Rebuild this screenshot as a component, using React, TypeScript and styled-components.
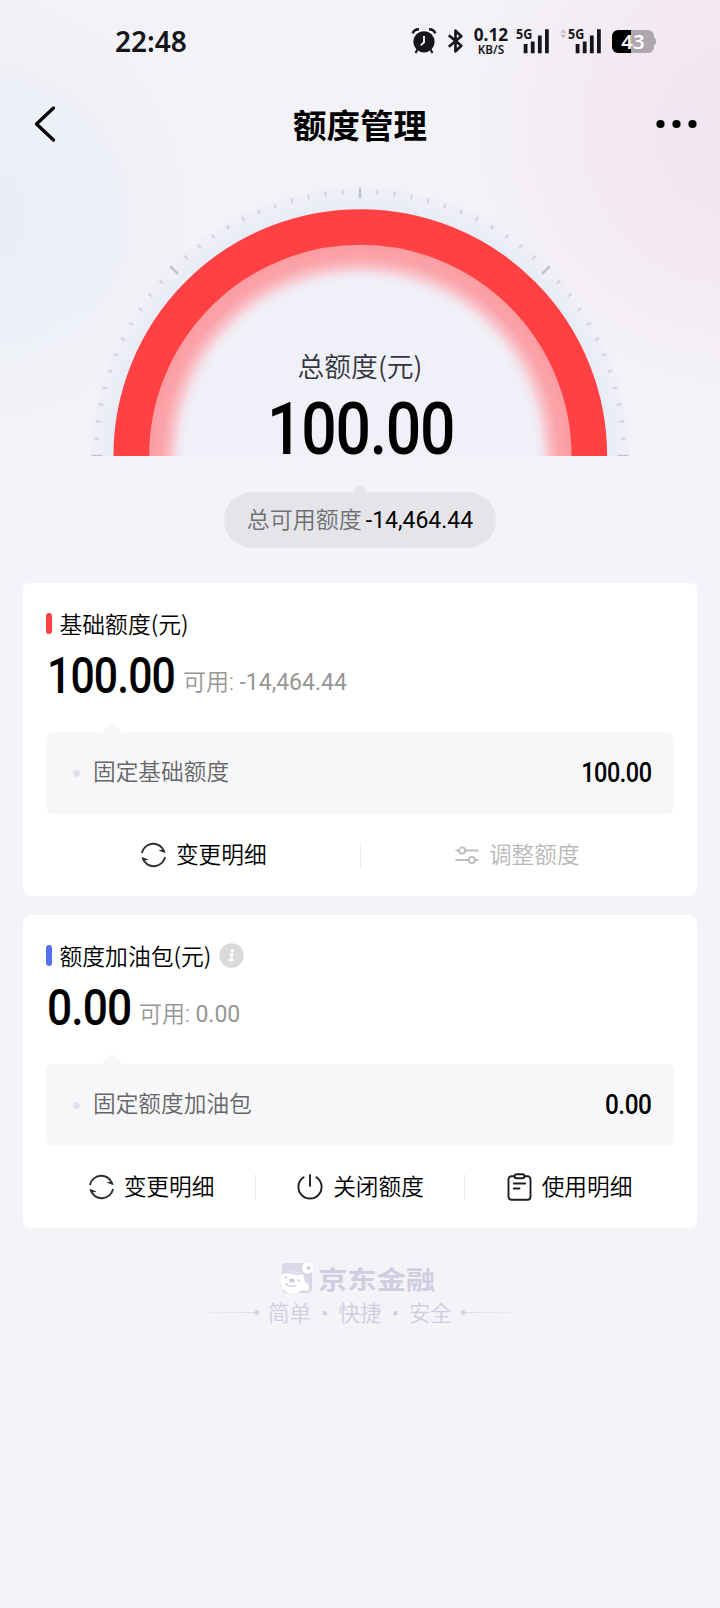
import React from "react";
import styled, { createGlobalStyle } from "styled-components";

const cjk = '"Noto Sans CJK SC", sans-serif';

const GlobalStyle = createGlobalStyle`
  *, *::before, *::after { box-sizing: border-box; }
  body { margin: 0; background: #f3f3f8; }
`;

const Page = styled.div`
  width: 720px;
  height: 1608px;
  overflow: hidden;
  display: flex;
  flex-direction: column;
  font-family: Roboto, ${cjk};
  color: #000;
  background:
    radial-gradient(circle at 740px 130px, #f4e5ed 0, rgba(244, 230, 238, 0.9) 100px, rgba(243, 238, 244, 0) 265px),
    radial-gradient(circle at -20px 215px, #e9edf6 0, rgba(234, 238, 247, 0.85) 70px, rgba(240, 240, 248, 0) 220px),
    linear-gradient(#f3f2f7, #f3f3f8 540px);
`;

const StatusBar = styled.header`
  height: 80px;
  display: flex;
  align-items: center;
  justify-content: space-between;
  padding: 2px 66px 0 115px;
`;

const Clock = styled.time`
  font: 600 28px/36px "Noto Sans", sans-serif;
  color: #15161a;
`;

const StatusIcons = styled.div`
  display: flex;
  align-items: center;
  color: #15161a;
`;

const Speed = styled.div`
  width: 36px;
  height: 30px;
  margin: 0 8px 0 9px;
  font-family: "Noto Sans", sans-serif;
  text-align: center;
`;

const SpeedValue = styled.div`
  font-size: 17.3px;
  font-weight: 700;
  line-height: 17px;
`;

const SpeedUnit = styled.div`
  font-size: 11.7px;
  font-weight: 600;
  line-height: 12px;
`;

const Battery = styled.div`
  width: 42px;
  height: 23px;
  margin-left: 11px;
  border-radius: 6px;
  display: flex;
  justify-content: center;
  position: relative;
  background: linear-gradient(90deg, #000 19px, #aea7ae 19px);
  color: #fff;
  font: 600 20.5px/22px "Noto Sans", sans-serif;
  &::after {
    content: "";
    position: absolute;
    right: -2px;
    top: 8px;
    width: 3px;
    height: 7px;
    border-radius: 0 2px 2px 0;
    background: #aea7ae;
  }
`;

const NavBar = styled.nav`
  height: 90px;
  display: flex;
  align-items: center;
  justify-content: space-between;
  padding: 0 23px 2px 34px;
`;

const NavButton = styled.button`
  width: 41px;
  height: 40px;
  padding: 0;
  border: 0;
  background: none;
  display: flex;
  align-items: center;
`;

const PageTitle = styled.h1`
  margin: 0 0 0 -11px;
  font: 700 33.5px/48px ${cjk};
`;

const Gauge = styled.section`
  height: 286px;
  position: relative;
  display: flex;
  flex-direction: column;
  align-items: center;
  padding-top: 178px;
`;

const Dial = styled.svg`
  position: absolute;
  left: 0;
  top: 0;
`;

const GaugeLabel = styled.div`
  position: relative;
  font-size: 26.8px;
  line-height: 36px;
  margin-bottom: 9px;
  color: #34353c;
  font-family: ${cjk};
  font-weight: 350;
`;

const Figure = styled.div<{ $size: number; $w: number; $right?: boolean; $scale?: number }>`
  position: relative;
  flex: none;
  width: ${(p) => p.$w}px;
  height: ${(p) => p.$size}px;
  display: flex;
  justify-content: ${(p) => (p.$right ? "flex-end" : "flex-start")};
  > span {
    font: 500 ${(p) => p.$size}px/${(p) => p.$size}px Roboto, sans-serif;
    letter-spacing: -0.02em;
    transform: scaleX(${(p) => p.$scale ?? 0.855});
    transform-origin: ${(p) => (p.$right ? "right" : "left")};
    white-space: nowrap;
  }
`;

const Available = styled.div`
  position: relative;
  align-self: center;
  width: 272px;
  height: 56px;
  margin-top: 36px;
  padding-top: 1px;
  border-radius: 28px;
  background: #e4e4e9;
  display: flex;
  align-items: center;
  justify-content: center;
  gap: 4px;
  font-size: 23px;
  line-height: 30px;
`;

const AvailableLabel = styled.span`
  color: #6f6f73;
  font-weight: 350;
`;

const Caret = styled.svg<{ $x: number; $y: number }>`
  position: absolute;
  left: ${(p) => p.$x}px;
  top: ${(p) => p.$y}px;
`;

const Cards = styled.main`
  margin-top: 35px;
  padding: 0 23px;
  display: flex;
  flex-direction: column;
  gap: 19px;
`;

const Card = styled.section`
  height: 313px;
  padding: 24px 23px 0;
  border-radius: 7px;
  background: #fff;
`;

const CardTitle = styled.h2`
  margin: 0;
  height: 32px;
  display: flex;
  align-items: center;
  font: 350 22.8px/32px ${cjk};
`;

const TitleText = styled.span`
  padding-top: 1px;
`;

const Marker = styled.i<{ $color: string }>`
  width: 6px;
  height: 21px;
  margin-right: 7.5px;
  border-radius: 3px;
  background: ${(p) => p.$color};
`;

const AmountRow = styled.div`
  height: 93px;
  display: flex;
  align-items: flex-start;
  padding: 13px 0 0 1px;
`;

const Usable = styled.span`
  padding-top: 15px;
  font-size: 23px;
  line-height: 32px;
  font-weight: 350;
  color: #969696;
  > span { font-weight: 400; }
`;

const Detail = styled.div`
  position: relative;
  height: 82px;
  padding: 0 23px 0 27px;
  display: flex;
  align-items: center;
  border-radius: 7px;
  background: #f7f7fa;
`;

const Dot = styled.i`
  width: 7px;
  height: 7px;
  margin-right: 13px;
  border-radius: 50%;
  background: #e1e0ee;
`;

const DetailLabel = styled.span`
  flex: 1;
  font-size: 22.7px;
  line-height: 32px;
  font-weight: 350;
  color: #666668;
`;

const Actions = styled.div`
  height: 82px;
  display: flex;
  align-items: center;
`;

const Action = styled.button<{ $muted?: boolean }>`
  flex: 1 1 0;
  height: 26px;
  padding: 0;
  border: 0;
  background: none;
  display: flex;
  align-items: center;
  justify-content: center;
  gap: 10px;
  font: 350 22.7px/24px ${cjk};
  color: ${(p) => (p.$muted ? "#b8b8b8" : "#000")};
  > span { padding-bottom: 2px; }
  &:first-child { padding-left: 1px; }
  & + & { box-shadow: -1px 0 #eeeef1; }
`;

const Footer = styled.footer`
  margin-top: 29px;
  display: flex;
  flex-direction: column;
  align-items: center;
  color: #cfcde0;
`;

const Brand = styled.div`
  height: 40px;
  display: flex;
  align-items: center;
  gap: 5px;
  margin-right: 4px;
  padding-top: 1px;
`;

const BrandName = styled.span`
  width: 117px;
  font: 700 25.5px/40px ${cjk};
  > span {
    display: inline-block;
    transform: scaleX(1.15);
    transform-origin: left;
  }
`;

const Tagline = styled.div`
  height: 32px;
  display: flex;
  align-items: center;
  gap: 8px;
  margin-top: -1px;
  font: 350 21.5px/32px ${cjk};
`;

const Words = styled.span`
  display: flex;
  width: 184px;
  justify-content: space-between;
`;

const Rule = styled.i<{ $flip?: boolean }>`
  width: 52px;
  height: 5px;
  transform: ${(p) => (p.$flip ? "scaleX(-1)" : "none")};
  background:
    radial-gradient(circle at 49px 2.5px, #d8d6e5 2px, transparent 3px),
    linear-gradient(90deg, rgba(224, 223, 235, 0.3), #dcdae8) 0 2px / 48px 1px no-repeat;
`;

const AlarmIcon = () => (
  <svg width="26" height="26" viewBox="0 0 26 26">
    <circle cx="13" cy="13.8" r="10.6" fill="currentColor" />
    <path d="M1.6 5.4Q3.5 1.2 8 1.3M24.4 5.4Q22.5 1.2 18 1.3" stroke="currentColor" strokeWidth="2.6" fill="none" />
    <path d="M6.5 21.5L4.5 25M19.5 21.5L21.5 25" stroke="currentColor" strokeWidth="2.2" />
    <path d="M13 8V14.3L9.8 17.4" stroke="#f3f2f7" strokeWidth="1.9" fill="none" />
  </svg>
);

const Bluetooth = styled.svg`
  margin-left: 10px;
`;

const BluetoothIcon = () => (
  <Bluetooth width="17" height="26" viewBox="0 0 17 26">
    <path d="M1.8 7.3L14.3 17.8L8.5 23.3V2.7L14.3 8.2L1.8 18.7" fill="none" stroke="currentColor" strokeWidth="2.7" strokeLinejoin="round" />
  </Bluetooth>
);

const Signal = styled.div<{ $roaming?: boolean }>`
  position: relative;
  width: ${(p) => (p.$roaming ? 41 : 32)}px;
  height: 26px;
  margin-left: ${(p) => (p.$roaming ? 11 : 0)}px;
  display: flex;
  justify-content: flex-end;
`;

const Generation = styled.span<{ $roaming?: boolean }>`
  position: absolute;
  left: ${(p) => (p.$roaming ? 8 : -1)}px;
  top: -3px;
  font: 700 13.5px/18px "Noto Sans", sans-serif;
  transform: scaleX(0.93);
  transform-origin: left;
`;

const SignalIcon = ({ roaming }: { roaming?: boolean }) => (
  <Signal $roaming={roaming}>
    <svg width={roaming ? 41 : 32} height="26" viewBox={roaming ? "-9 0 41 26" : "0 0 32 26"}>
      {roaming && <path d="M-9 5L-5.7 1L-2.4 5ZM-9 6.6L-5.7 10.6L-2.4 6.6Z" fill="#c9c6cc" />}
      <path d="M6.7 16h3.8v9.2h-3.8zM13.8 13.5h3.8v11.7h-3.8zM20.9 7.5h3.8v17.7h-3.8zM28 1.3h3.8v23.9h-3.8z" fill="currentColor" />
    </svg>
    <Generation $roaming={roaming}>5G</Generation>
  </Signal>
);

const RefreshIcon = () => (
  <svg width="25" height="26" viewBox="0 0 25 26">
    <g fill="none" stroke="#2d2d30" strokeWidth="1.9">
      <path d="M0.9 11A11.6 11.6 0 0 1 23.2 9.5" />
      <path d="M24.1 15A11.6 11.6 0 0 1 1.8 16.5" />
    </g>
    <path d="M17.5 8.6L24.6 11.3L22.9 7ZM7.5 17.4L0.4 14.7L2.1 19Z" fill="#2d2d30" />
  </svg>
);

const SlidersIcon = () => (
  <svg width="24" height="24" viewBox="0 0 24 24" fill="none" stroke="#bfbfbf" strokeWidth="1.9">
    <path d="M0.5 7.5H3.7M10.3 7.5H23.5M0.5 17H13.5M20.2 17H23.5" />
    <circle cx="7" cy="7.5" r="3.1" />
    <circle cx="16.8" cy="17" r="3.1" />
  </svg>
);

const PowerIcon = () => (
  <svg width="26" height="26" viewBox="0 0 26 26" fill="none" stroke="#1f1f22" strokeWidth="1.9" strokeLinecap="round">
    <path d="M6.6 3.3A11.6 11.6 0 1 0 19.4 3.3M13 1V12" />
  </svg>
);

const ClipboardIcon = () => (
  <svg width="25" height="28" viewBox="0 0 25 28" fill="none" stroke="#1f1f22" strokeWidth="1.9" strokeLinecap="round">
    <path d="M7.5 3.2H4.5A3 3 0 0 0 1.5 6.2V23.8A3 3 0 0 0 4.5 26.8H20.5A3 3 0 0 0 23.5 23.8V6.2A3 3 0 0 0 20.5 3.2H17.5" />
    <rect x="7.5" y="1.2" width="10" height="4" rx="2" />
    <path d="M6.8 10.5H18.2M6.8 15.5H12.5" />
  </svg>
);

const Info = styled.svg`
  margin-left: 8px;
`;

const InfoIcon = () => (
  <Info width="25" height="25" viewBox="0 0 25 25">
    <circle cx="12.5" cy="12.5" r="12.3" fill="#dadada" />
    <circle cx="13.4" cy="7.7" r="1.8" fill="#fff" />
    <path d="M10.3 11.2H13.2L12 17.2H14.6M9.4 17.2H12" fill="none" stroke="#fff" strokeWidth="2" />
  </Info>
);

const MascotIcon = () => (
  <svg width="32" height="32" viewBox="0 0 32 32">
    <path d="M5 1H22L31 9V26Q31 31 26 31H6Q1 31 1 26V5Q1 1 5 1Z" fill="#dad8e7" />
    <path d="M0 13Q5 9.5 11 12Q16 14 22 12L24 20Q30 23 27.5 28L25 29Q20 27 17 31H7Q0 28 0 22Z" fill="#fff" />
    <path d="M8 8.5Q13 11.5 20 11" stroke="#e8e6f0" strokeWidth="1.5" fill="none" />
    <circle cx="26.5" cy="6" r="5.5" fill="#fff" />
    <circle cx="27.5" cy="6" r="2.1" fill="#cfcde0" />
    <ellipse cx="11" cy="18.5" rx="3" ry="2" fill="#cbc9dc" transform="rotate(10 11 18.5)" />
    <circle cx="5" cy="15.5" r="1.1" fill="#c5c3d8" />
    <circle cx="17.5" cy="18.5" r="1.1" fill="#c5c3d8" />
    <path d="M4.5 21.5Q9 26 15 23.5" stroke="#cbc9dc" strokeWidth="1.3" fill="none" />
  </svg>
);

const ticks = Array.from({ length: 49 }, (_, i) => ({ angle: -90 + i * 3.75, major: i % 12 === 0 }));

const DialDrawing = () => (
  <Dial width="720" height="286" viewBox="0 170 720 286">
    <defs>
      <radialGradient id="glow" gradientUnits="userSpaceOnUse" cx="360" cy="456" r="211">
        <stop offset="0.83" stopColor="#eff0f8" />
        <stop offset="0.86" stopColor="#f4e4ec" />
        <stop offset="0.9" stopColor="#f9bfc7" />
        <stop offset="0.94" stopColor="#fba4aa" />
        <stop offset="1" stopColor="#fb9da3" />
      </radialGradient>
      <radialGradient id="halo" gradientUnits="userSpaceOnUse" cx="360" cy="456" r="269">
        <stop offset="0.92" stopColor="#e8ecf6" />
        <stop offset="0.96" stopColor="#edeef7" />
        <stop offset="1" stopColor="#f0f0f7" />
      </radialGradient>
    </defs>
    <circle cx="360" cy="456" r="269" fill="url(#halo)" />
    {ticks.map(({ angle, major }) => (
      <path
        key={angle}
        d={major ? "M360 187.5V198.5" : "M360 189.7V194.3"}
        stroke={major ? "#bfc1cc" : "#d3d4de"}
        strokeWidth={major ? 2.4 : 2.2}
        transform={`rotate(${angle} 360 456)`}
      />
    ))}
    <circle cx="360" cy="456" r="212" fill="url(#glow)" />
    <circle cx="360.3" cy="456" r="229" fill="none" stroke="#ff4144" strokeWidth="35.7" />
  </Dial>
);

const Notch = ({ x, y, color }: { x: number; y: number; color: string }) => (
  <Caret $x={x} $y={y} width="28" height="13" viewBox="0 0 28 13">
    <path d="M0 13Q3 12.5 5 10L11.5 3Q14 0.5 16.5 3L23 10Q25 12.5 28 13Z" fill={color} />
  </Caret>
);

type Item = { icon: React.ReactNode; label: string; muted?: boolean };

type QuotaProps = {
  title: string;
  color: string;
  info?: boolean;
  amount: string;
  amountWidth: number;
  amountScale: number;
  usable: string;
  detail: string;
  actions: Item[];
};

const QuotaCard = ({ title, color, info, amount, amountWidth, amountScale, usable, detail, actions }: QuotaProps) => (
  <Card>
    <CardTitle>
      <Marker $color={color} />
      <TitleText>{title}</TitleText>
      {info && <InfoIcon />}
    </CardTitle>
    <AmountRow>
      <Figure $size={49.5} $w={amountWidth} $scale={amountScale}><span>{amount}</span></Figure>
      <Usable>可用: <span>{usable}</span></Usable>
    </AmountRow>
    <Detail>
      <Notch x={52} y={-11} color="#f7f7fa" />
      <Dot />
      <DetailLabel>{detail}</DetailLabel>
      <Figure $size={27.5} $w={80} $scale={amountScale - 0.01} $right><span>{amount}</span></Figure>
    </Detail>
    <Actions>
      {actions.map((a) => (
        <Action key={a.label} $muted={a.muted}>
          {a.icon}
          <span>{a.label}</span>
        </Action>
      ))}
    </Actions>
  </Card>
);

export default function App() {
  return (
    <Page>
      <GlobalStyle />
      <StatusBar>
        <Clock>22:48</Clock>
        <StatusIcons>
          <AlarmIcon />
          <BluetoothIcon />
          <Speed>
            <SpeedValue>0.12</SpeedValue>
            <SpeedUnit>KB/S</SpeedUnit>
          </Speed>
          <SignalIcon />
          <SignalIcon roaming />
          <Battery>43</Battery>
        </StatusIcons>
      </StatusBar>
      <NavBar>
        <NavButton aria-label="返回">
          <svg width="22" height="38" viewBox="0 0 22 38">
            <path d="M19.5 3L2.5 19L19.5 35" fill="none" stroke="#000" strokeWidth="3.3" strokeLinecap="round" strokeLinejoin="round" />
          </svg>
        </NavButton>
        <PageTitle>额度管理</PageTitle>
        <NavButton aria-label="更多">
          <svg width="41" height="10" viewBox="0 0 41 10">
            <circle cx="4.5" cy="5" r="4.1" />
            <circle cx="20.5" cy="5" r="4.1" />
            <circle cx="36.5" cy="5" r="4.1" />
          </svg>
        </NavButton>
      </NavBar>
      <Gauge>
        <DialDrawing />
        <GaugeLabel>总额度(元)</GaugeLabel>
        <Figure $size={73} $w={186}><span>100.00</span></Figure>
      </Gauge>
      <Available>
        <Notch x={122} y={-8} color="#e4e4e9" />
        <AvailableLabel>总可用额度</AvailableLabel>
        <span>-14,464.44</span>
      </Available>
      <Cards>
        <QuotaCard
          title="基础额度(元)"
          color="#ff4144"
          amount="100.00"
          amountWidth={136}
          amountScale={0.862}
          usable="-14,464.44"
          detail="固定基础额度"
          actions={[
            { icon: <RefreshIcon />, label: "变更明细" },
            { icon: <SlidersIcon />, label: "调整额度", muted: true },
          ]}
        />
        <QuotaCard
          title="额度加油包(元)"
          color="#5570f6"
          info
          amount="0.00"
          amountWidth={92}
          amountScale={0.895}
          usable="0.00"
          detail="固定额度加油包"
          actions={[
            { icon: <RefreshIcon />, label: "变更明细" },
            { icon: <PowerIcon />, label: "关闭额度" },
            { icon: <ClipboardIcon />, label: "使用明细" },
          ]}
        />
      </Cards>
      <Footer>
        <Brand>
          <MascotIcon />
          <BrandName><span>京东金融</span></BrandName>
        </Brand>
        <Tagline>
          <Rule />
          <Words><span>简单</span><span>·</span><span>快捷</span><span>·</span><span>安全</span></Words>
          <Rule $flip />
        </Tagline>
      </Footer>
    </Page>
  );
}
